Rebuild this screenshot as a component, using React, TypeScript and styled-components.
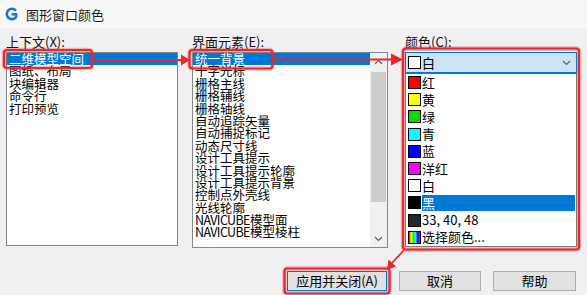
import * as React from 'react';
import styled, { createGlobalStyle } from 'styled-components';

const GlobalStyle = createGlobalStyle`
  html, body {
    margin: 0;
    padding: 0;
    background: #f0eff1;
  }
  body {
    font-family: "Noto Sans CJK SC", "Noto Sans", sans-serif;
  }
`;

const Window = styled.div`
  position: relative;
  width: 587px;
  height: 295px;
  overflow: hidden;
  background: #f0eff1;
  display: flex;
  flex-direction: column;
`;

const TitleBar = styled.div`
  height: 28px;
  flex: none;
  display: flex;
  align-items: center;
  gap: 8px;
  padding-left: 5px;
  background: #f8f8f9;
  font-size: 13px;
  color: #1a1a1a;
`;

const Body = styled.div`
  display: flex;
  padding: 6px 0 0 6px;
`;

const Column = styled.div<{ $w: number; $ml?: number }>`
  width: ${(p) => p.$w}px;
  margin-left: ${(p) => p.$ml ?? 0}px;
  display: flex;
  flex-direction: column;
`;

const Label = styled.div`
  height: 16px;
  line-height: 16px;
  font-size: 13px;
  color: #111;
  margin-bottom: 2px;
  white-space: nowrap;
`;

const ListBox = styled.div<{ $h: number }>`
  height: ${(p) => p.$h}px;
  box-sizing: border-box;
  border: 1px solid #828790;
  background: #fff;
  display: flex;
  overflow: hidden;
`;

const Items = styled.div`
  flex: 1;
  min-width: 0;
`;

const Item = styled.div<{ $sel?: boolean }>`
  height: 12.4px;
  line-height: 12.4px;
  font-size: 12.5px;
  padding-left: 2px;
  white-space: nowrap;
  color: ${(p) => (p.$sel ? '#fff' : '#000')};
  background: ${(p) => (p.$sel ? '#0078d7' : 'transparent')};
`;

const Latin = styled.span`
  letter-spacing: -0.6px;
`;

const Scrollbar = styled.div`
  width: 17px;
  flex: none;
  background: #f0f0f0;
  display: flex;
  flex-direction: column;
`;

const ScrollArrow = styled.div`
  height: 17px;
  flex: none;
  display: flex;
  align-items: center;
  justify-content: center;
`;

const Track = styled.div`
  flex: 1;
  padding: 2px 1px 0;
`;

const Thumb = styled.div`
  height: 130px;
  background: #cdcdcd;
`;

const Combo = styled.div`
  height: 22px;
  box-sizing: border-box;
  border: 1px solid #0078d7;
  border-bottom-width: 2px;
  background: #cce4f7;
  display: flex;
  align-items: center;
  padding: 0 5px 0 2px;
  font-size: 13px;
  gap: 1px;
`;

const ComboText = styled.span`
  flex: 1;
`;

const Dropdown = styled.div`
  height: 173px;
  box-sizing: border-box;
  border: 1px solid #7a7a7a;
  border-top: none;
  background: #fff;
  padding-left: 1px;
`;

const ColorRow = styled.div`
  height: 17.2px;
  display: flex;
  align-items: center;
  padding-left: 1px;
`;

const Swatch = styled.span<{ $c: string }>`
  width: 13px;
  height: 13px;
  flex: none;
  box-sizing: border-box;
  border: 1px solid #000;
  background: ${(p) => p.$c};
`;

const ColorName = styled.span<{ $sel?: boolean }>`
  flex: 1;
  height: 16px;
  line-height: 16px;
  margin-left: 1px;
  margin-right: 1px;
  font-size: 13px;
  white-space: nowrap;
  color: ${(p) => (p.$sel ? '#fff' : '#000')};
  background: ${(p) => (p.$sel ? '#0078d7' : 'transparent')};
`;

const ButtonRow = styled.div`
  display: flex;
  justify-content: flex-end;
  gap: 12px;
  margin-top: 23px;
  padding-right: 11px;
`;

const Button = styled.button<{ $w: number; $default?: boolean }>`
  width: ${(p) => p.$w}px;
  height: 20px;
  padding: 0;
  box-sizing: border-box;
  border: 1px solid ${(p) => (p.$default ? '#0078d7' : '#adadad')};
  background: #e1e1e1;
  font-family: "Noto Sans CJK SC", "Noto Sans", sans-serif;
  font-size: 13px;
  line-height: 18px;
  color: #000;
`;

const Overlay = styled.svg`
  position: absolute;
  left: 0;
  top: 0;
  pointer-events: none;
`;

const contexts = ['二维模型空间', '图纸、布局', '块编辑器', '命令行', '打印预览'];

const elements = [
  '统一背景',
  '十字光标',
  '栅格主线',
  '栅格辅线',
  '栅格轴线',
  '自动追踪矢量',
  '自动捕捉标记',
  '动态尺寸线',
  '设计工具提示',
  '设计工具提示轮廓',
  '设计工具提示背景',
  '控制点外壳线',
  '光线轮廓',
  'NAVICUBE|模型面',
  'NAVICUBE|模型棱柱',
];

const colors: { name: string; c: string; sel?: boolean }[] = [
  { name: '红', c: '#ff0000' },
  { name: '黄', c: '#ffff00' },
  { name: '绿', c: '#00e000' },
  { name: '青', c: '#00ffff' },
  { name: '蓝', c: '#0000ff' },
  { name: '洋红', c: '#ff00ff' },
  { name: '白', c: '#ffffff' },
  { name: '黑', c: '#000000', sel: true },
  { name: '33, 40, 48', c: '#21282f' },
  {
    name: '选择颜色...',
    c: 'linear-gradient(90deg, #f00, #ff0, #0f0, #0ff, #00f, #f0f)',
  },
];

const Chevron = ({ up }: { up?: boolean }) => (
  <svg width="9" height="6" viewBox="0 0 9 6">
    <polyline
      points={up ? '1,5 4.5,1.5 8,5' : '1,1 4.5,4.5 8,1'}
      fill="none"
      stroke="#606060"
      strokeWidth="1.2"
    />
  </svg>
);

const Logo = () => (
  <svg width="13" height="14" viewBox="0 0 13 14">
    <path
      d="M11 3.6 A5.2 5.2 0 1 0 11 10.2 L11.3 7.2 L6.6 7.2"
      fill="none"
      stroke="#1d6ee0"
      strokeWidth="2.6"
      strokeLinejoin="round"
    />
  </svg>
);

const red = '#e8282a';

const Box = ({ x, y, w, h }: { x: number; y: number; w: number; h: number }) => (
  <g>
    <rect x={x} y={y} width={w} height={h} rx="3" fill="none" stroke={red} strokeOpacity="0.3" strokeWidth="4.5" />
    <rect x={x} y={y} width={w} height={h} rx="3" fill="none" stroke={red} strokeWidth="2.2" />
  </g>
);

const Annotations = () => (
  <Overlay width="587" height="295" viewBox="0 0 587 295">
    <Box x={4} y={50} w={88} h={18} />
    <line x1="92" y1="60" x2="184" y2="60" stroke={red} strokeWidth="1.8" />
    <polygon points="181,54.5 190,60 181,65.5" fill={red} />
    <Box x={189.5} y={50} w={83} h={18.5} />
    <line x1="273" y1="59.5" x2="394" y2="59.5" stroke={red} strokeWidth="1.8" />
    <polygon points="391,53.5 403,59.5 391,65.5" fill={red} />
    <Box x={403} y={48.5} w={176} h={201} />
    <line x1="404" y1="250" x2="392" y2="263" stroke={red} strokeWidth="1.8" />
    <polygon points="396,266.5 387,270 388.5,259.5" fill={red} />
    <Box x={284.5} y={268.5} w={105} h={25} />
  </Overlay>
);

const renderLabel = (t: string) => {
  const [latin, rest] = t.split('|');
  if (rest === undefined) return t;
  return (
    <>
      <Latin>{latin}</Latin>
      {rest}
    </>
  );
};

export default function App() {
  return (
    <>
      <GlobalStyle />
      <Window>
        <TitleBar>
          <Logo />
          <span>图形窗口颜色</span>
        </TitleBar>
        <Body>
          <Column $w={172}>
            <Label>上下文(X):</Label>
            <ListBox $h={194}>
              <Items>
                {contexts.map((t, i) => (
                  <Item key={t} $sel={i === 0}>
                    {t}
                  </Item>
                ))}
              </Items>
            </ListBox>
          </Column>
          <Column $w={196} $ml={14}>
            <Label>界面元素(E):</Label>
            <ListBox $h={196}>
              <Items>
                {elements.map((t, i) => (
                  <Item key={t} $sel={i === 0}>
                    {renderLabel(t)}
                  </Item>
                ))}
              </Items>
              <Scrollbar>
                <ScrollArrow>
                  <Chevron up />
                </ScrollArrow>
                <Track>
                  <Thumb />
                </Track>
                <ScrollArrow>
                  <Chevron />
                </ScrollArrow>
              </Scrollbar>
            </ListBox>
          </Column>
          <Column $w={172} $ml={17}>
            <Label>颜色(C):</Label>
            <Combo>
              <Swatch $c="#ffffff" />
              <ComboText>白</ComboText>
              <Chevron />
            </Combo>
            <Dropdown>
              {colors.map((c) => (
                <ColorRow key={c.name}>
                  <Swatch $c={c.c} />
                  <ColorName $sel={c.sel}>{c.name}</ColorName>
                </ColorRow>
              ))}
            </Dropdown>
          </Column>
        </Body>
        <ButtonRow>
          <Button $w={100} $default>
            应用并关闭(A)
          </Button>
          <Button $w={82}>取消</Button>
          <Button $w={83}>帮助</Button>
        </ButtonRow>
        <Annotations />
      </Window>
    </>
  );
}
